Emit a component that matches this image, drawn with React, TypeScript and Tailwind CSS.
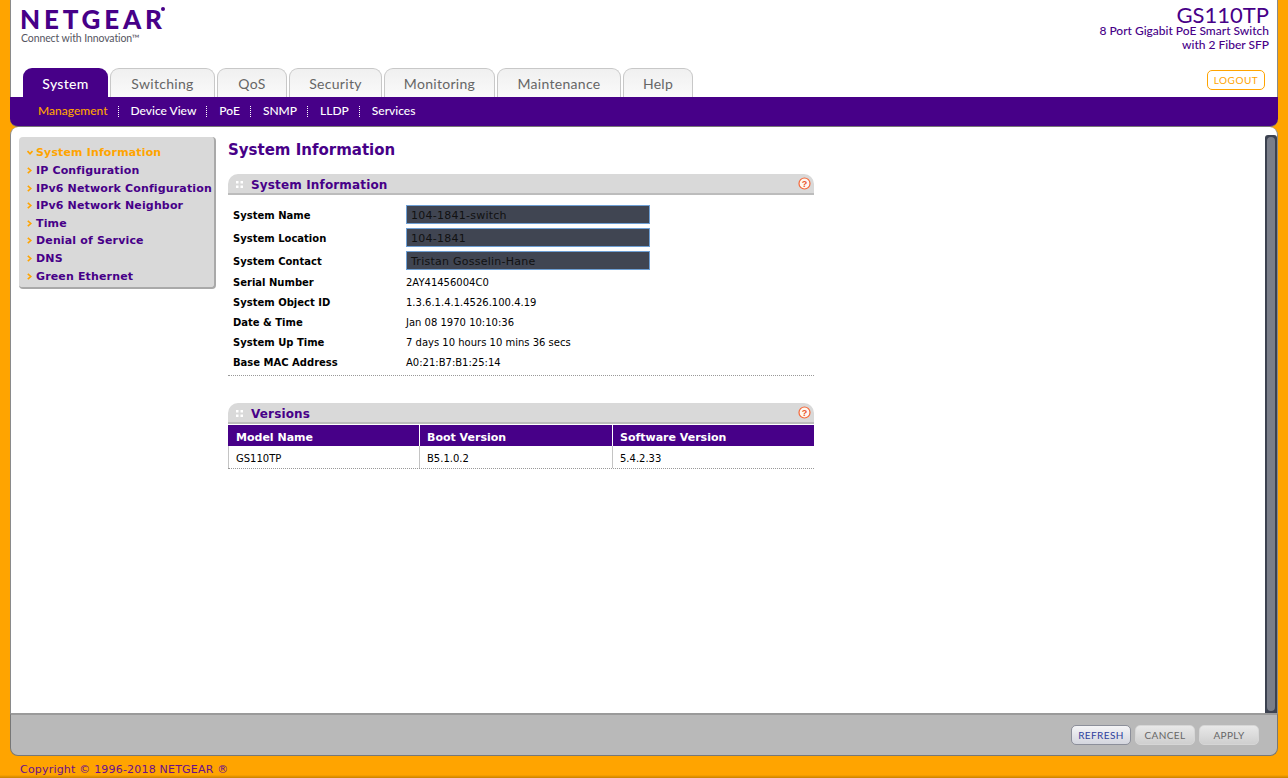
import React from "react";

const tabs = [
  { label: "System", width: "w-[85px]", active: true },
  { label: "Switching", width: "w-[105px]" },
  { label: "QoS", width: "w-[70px]" },
  { label: "Security", width: "w-[93px]" },
  { label: "Monitoring", width: "w-[111px]" },
  { label: "Maintenance", width: "w-[124px]" },
  { label: "Help", width: "w-[70px]" },
];

const subNav = ["Management", "Device View", "PoE", "SNMP", "LLDP", "Services"];

const sideItems = [
  { label: "System Information", rowClass: "h-[18px]" },
  { label: "IP Configuration", rowClass: "h-[18px]" },
  { label: "IPv6 Network Configuration", rowClass: "h-[18px]" },
  { label: "IPv6 Network Neighbor", rowClass: "h-[17px]" },
  { label: "Time", rowClass: "h-[18px]" },
  { label: "Denial of Service", rowClass: "h-[17px]" },
  { label: "DNS", rowClass: "h-[18px]" },
  { label: "Green Ethernet", rowClass: "h-[18px]" },
];

const inputs = [
  { label: "System Name", value: "104-1841-switch" },
  { label: "System Location", value: "104-1841" },
  { label: "System Contact", value: "Tristan Gosselin-Hane" },
];

const details = [
  { label: "Serial Number", value: "2AY41456004C0" },
  { label: "System Object ID", value: "1.3.6.1.4.1.4526.100.4.19" },
  { label: "Date & Time", value: "Jan 08 1970 10:10:36" },
  { label: "System Up Time", value: "7 days 10 hours 10 mins 36 secs" },
  { label: "Base MAC Address", value: "A0:21:B7:B1:25:14" },
];

function HelpIcon() {
  return (
    <svg width="13" height="13" viewBox="0 0 13 13" className="shrink-0 mb-[2px]">
      <circle cx="6.5" cy="6.5" r="5.5" fill="#fff7f0" stroke="#f4683a" strokeWidth="1.2" />
      <text x="6.5" y="9.8" textAnchor="middle" fontSize="9" fontWeight="700" fontFamily="Liberation Sans, sans-serif" fill="#e8552a">
        ?
      </text>
    </svg>
  );
}

function Grip() {
  return (
    <svg width="7" height="7" viewBox="0 0 7 7" className="shrink-0">
      <rect x="0" y="0" width="2.5" height="2.5" fill="#fff" />
      <rect x="4.5" y="0" width="2.5" height="2.5" fill="#fff" />
      <rect x="0" y="4.5" width="2.5" height="2.5" fill="#fff" />
      <rect x="4.5" y="4.5" width="2.5" height="2.5" fill="#fff" />
    </svg>
  );
}

function PanelHeader({ title }: { title: string }) {
  return (
    <div className="h-[21px] bg-[#d9d9d9] rounded-t-[10px] border-b-2 border-[#bcbcbc] flex items-center pl-[8px] pr-[3px] pt-[2px]">
      <Grip />
      <span className="ml-[8px] flex-1 text-[12px] tracking-[0.15px] font-bold text-[#470088]">{title}</span>
      <HelpIcon />
    </div>
  );
}

function SideArrow({ open }: { open?: boolean }) {
  return (
    <svg width="6" height="7" viewBox="0 0 6 7" className="shrink-0 mb-[2px]">
      <path
        d={open ? "M0.5 2 L3 4.8 L5.5 2" : "M0.8 0.8 L3.8 3.5 L0.8 6.2"}
        fill="none"
        stroke="#ffa400"
        strokeWidth="1.6"
      />
    </svg>
  );
}

export default function App() {
  return (
    <div className="w-[1288px] h-[778px] overflow-hidden bg-gradient-to-b from-[#ffa400] from-[99.6%] to-[#c98200] px-[10px] flex flex-col font-['DejaVu_Sans',sans-serif]">
      {/* Header */}
      <div className="h-[97px] bg-white border-x border-[#8a8a8a] flex flex-col relative">
        <div className="flex-1 flex justify-between pl-[9px] pr-[8px]">
          <div>
            <div className="relative h-[24px] mt-[7px] text-[26px] leading-[24px] font-black tracking-[3.8px] text-[#470088] font-['Lato',sans-serif]">
              NETGEAR
              <span className="absolute left-[141px] top-[0px] w-[4px] h-[4px] rounded-full bg-[#470088]" />
            </div>
            <div className="ml-[1px] text-[10.5px] leading-[14px] tracking-[-0.1px] text-[#55555f] font-['Lato',sans-serif]">
              Connect with Innovation™
            </div>
          </div>
          <div className="text-right text-[#470088] font-['Lato',sans-serif]">
            <div className="mt-[6px] text-[22px] leading-[18px]">GS110TP</div>
            <div className="text-[12px] leading-[14px] font-medium">8 Port Gigabit PoE Smart Switch</div>
            <div className="text-[12px] leading-[14px] font-medium">with 2 Fiber SFP</div>
          </div>
        </div>
        <div className="h-[29px] flex items-end justify-between pl-[12px] pr-[12px]">
          <div className="flex gap-[2px] font-['Lato',sans-serif]">
            {tabs.map((tab) => (
              <div
                key={tab.label}
                className={`${tab.width} h-[29px] pt-[1px] rounded-t-[9px] flex items-center justify-center text-[14px] tracking-[0.3px] ${
                  tab.active
                    ? "bg-[#470088] text-white font-medium"
                    : "bg-gradient-to-b from-[#f0f0f0] to-[#fafafa] border border-b-0 border-[#c8c8c8] text-[#666666]"
                }`}
              >
                {tab.label}
              </div>
            ))}
          </div>
          <div className="mb-[7px] pt-[1px] w-[58px] h-[20px] rounded-[5px] border border-[#ffa400] bg-white text-[#ffa400] text-[10px] tracking-[0.5px] flex items-center justify-center font-['Lato',sans-serif]">
            LOGOUT
          </div>
        </div>
      </div>

      {/* Sub navigation */}
      <div className="h-[30px] shrink-0 bg-[#470088] border-b border-[#777777] rounded-b-[8px] flex items-center pl-[28px] pb-[1px] text-[12px] font-medium text-white font-['Lato',sans-serif]">
        {subNav.map((item, i) => (
          <div key={item} className="flex items-center">
            <span className={i === 0 ? "text-[#ffa400]" : ""}>{item}</span>
            {i < subNav.length - 1 && <span className="ml-[10px] mr-[12px] h-[11px] border-l border-dotted border-white" />}
          </div>
        ))}
      </div>

      {/* Content */}
      <div className="flex-1 min-h-0 bg-white rounded-t-[8px] border-x border-[#8a8a8a] flex">
        <div className="flex-1 flex items-start pt-[10px] pl-[8px]">
          <div className="w-[197px] h-[152px] bg-[#d9d9d9] rounded-[4px] border-r-2 border-b-2 border-[#a9a9a9] pt-[7px] pl-[8px] text-[11px] tracking-[0.15px] font-bold text-[#470088]">
            {sideItems.map((item, i) => (
              <div key={item.label} className={`${item.rowClass} flex items-center gap-[3px] whitespace-nowrap`}>
                <SideArrow open={i === 0} />
                <span className={i === 0 ? "text-[#ffa400]" : ""}>{item.label}</span>
              </div>
            ))}
          </div>

          <div className="w-[586px] ml-[12px]">
            <h1 className="mt-[1px] h-[26px] text-[15px] leading-[24px] font-bold text-[#470088]">System Information</h1>

            <div className="mt-[10px]">
              <PanelHeader title="System Information" />
              <div className="pt-[10px] pb-[3px] border-b border-dotted border-[#999999] text-[10px] text-black">
                {inputs.map((row, i) => (
                  <div key={row.label} className={`${i === 2 ? "h-[21px]" : "h-[23px]"} flex items-start`}>
                    <span className="w-[178px] pl-[5px] font-bold leading-[21px] shrink-0">{row.label}</span>
                    <div className="w-[244px] h-[19px] bg-[#404552] border border-[#6e9fd4] pl-[4px] text-[11px] tracking-[0.25px] leading-[19px] text-[#111111]">
                      {row.value}
                    </div>
                  </div>
                ))}
                {details.map((row) => (
                  <div key={row.label} className="h-[20px] flex items-center">
                    <span className="w-[178px] pl-[5px] font-bold shrink-0">{row.label}</span>
                    <span>{row.value}</span>
                  </div>
                ))}
              </div>
            </div>

            <div className="mt-[27px]">
              <PanelHeader title="Versions" />
              <div className="flex h-[21px] mt-[1px] bg-[#470088] text-white text-[11px] font-bold">
                <div className="w-[191px] pl-[8px] pt-[5px]">Model Name</div>
                <div className="w-[193px] pl-[7px] pt-[5px] border-l border-white">Boot Version</div>
                <div className="flex-1 pl-[7px] pt-[5px] border-l border-white">Software Version</div>
              </div>
              <div className="flex h-[23px] items-stretch border-b border-dotted border-[#999999] text-[10px] text-black">
                <div className="w-[191px] pl-[7px] pt-[2px] flex items-center border-l border-[#c4c4c4]">GS110TP</div>
                <div className="w-[193px] pl-[7px] pt-[2px] flex items-center border-l border-[#c4c4c4]">B5.1.0.2</div>
                <div className="flex-1 pl-[7px] pt-[2px] flex items-center border-l border-[#c4c4c4]">5.4.2.33</div>
              </div>
            </div>
          </div>
        </div>

        {/* Scrollbar */}
        <div className="w-[12px] mt-[8px] bg-[#3c4250] rounded-t-[3px] p-[2px] flex">
          <div className="w-full h-full rounded-[4px] bg-[#7a7e89]" />
        </div>
      </div>

      {/* Button bar */}
      <div className="h-[43px] shrink-0 bg-[#b9b9b9] border-t-2 border-[#9a9a9a] border-x border-b-[1px] border-x-[#777777] border-b-[#777777] rounded-b-[8px] flex items-center justify-end gap-[4px] pr-[18px] font-['Lato',sans-serif] text-[10px] tracking-[0.4px]">
        <div className="w-[60px] h-[20px] rounded-[5px] bg-gradient-to-b from-[#f4f4f6] to-[#d4d6de] border border-[#8c8f9a] text-[#2f3f9e] flex items-center justify-center">REFRESH</div>
        <div className="w-[60px] h-[20px] rounded-[5px] bg-gradient-to-b from-[#e8e8e8] to-[#cfcfcf] border border-[#d6d6d6] text-[#666666] flex items-center justify-center">CANCEL</div>
        <div className="w-[60px] h-[20px] rounded-[5px] bg-gradient-to-b from-[#e8e8e8] to-[#cfcfcf] border border-[#d6d6d6] text-[#666666] flex items-center justify-center">APPLY</div>
      </div>

      {/* Copyright */}
      <div className="h-[22px] shrink-0 pl-[10px] pt-[7px] text-[11px] tracking-[0.2px] leading-[14px] text-[#6a0f8c]">
        Copyright © 1996-2018 NETGEAR ®
      </div>
    </div>
  );
}
